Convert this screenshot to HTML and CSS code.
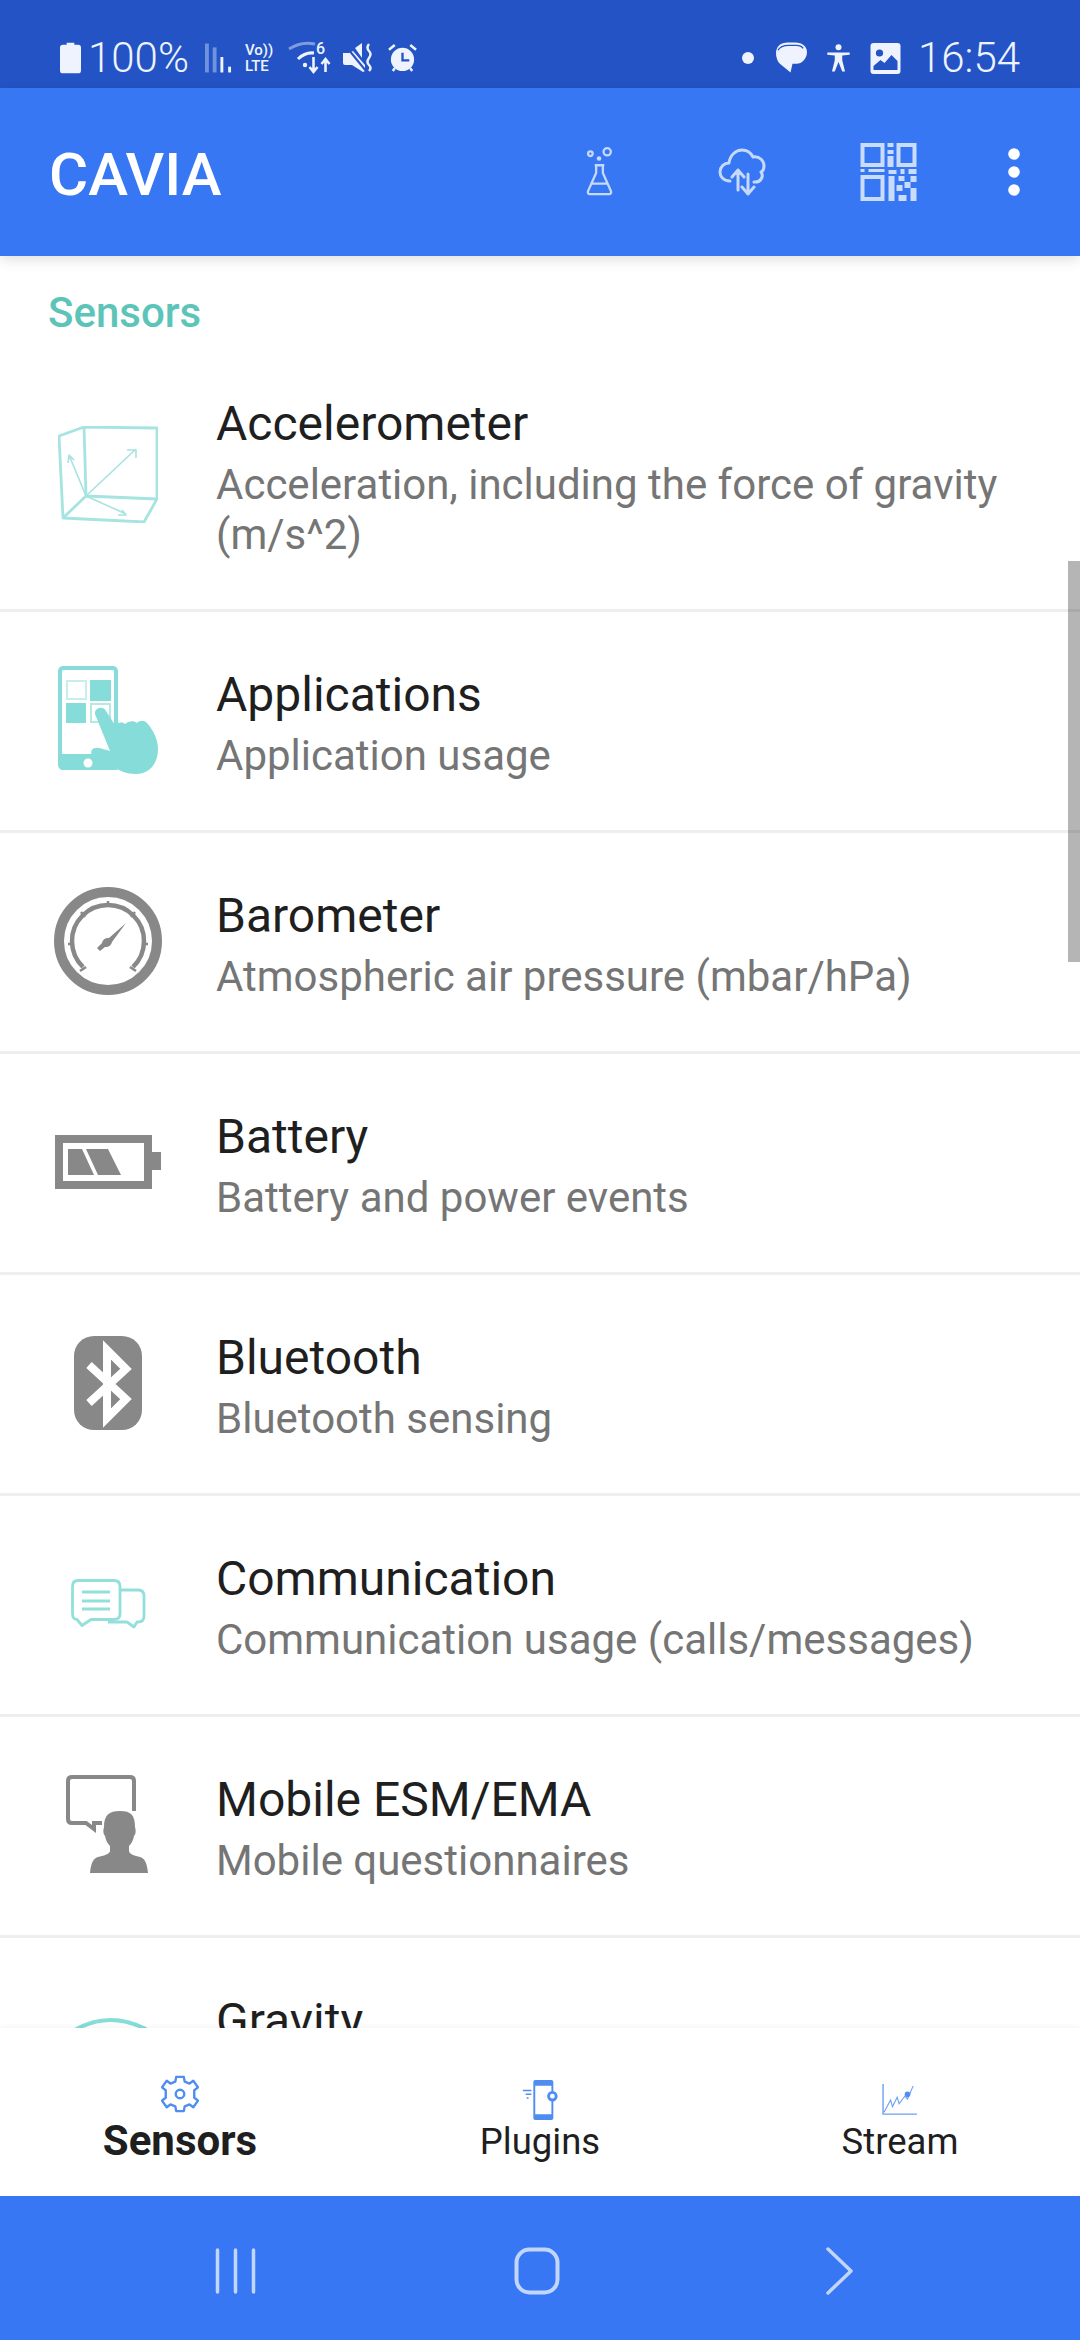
FILE: index.html
```html
<!DOCTYPE html>
<html lang="en">
<head>
  <meta charset="UTF-8" />
  <meta name="viewport" content="width=device-width, initial-scale=1.0" />
  <title>CAVIA</title>
  <link rel="stylesheet" href="styles.css">
</head>
<body>
  <div class="status-bar">
    <div class="status-group">
      <svg class="ic-batt" viewBox="0 0 22 32"><path d="M7 0h8v2h4a3 3 0 0 1 3 3v24a3 3 0 0 1-3 3H3a3 3 0 0 1-3-3V5a3 3 0 0 1 3-3h4z" fill="#eef3fd"/></svg>
      <span class="status-text">100%</span>
      <svg class="ic-signal" viewBox="0 0 28 32"><rect x="0" y="1" width="4" height="30" fill="#6f93de"/><rect x="8" y="5" width="4" height="26" fill="#6f93de"/><rect x="16" y="15" width="3" height="16" fill="#eef3fd"/><rect x="24" y="25" width="3" height="6" fill="#eef3fd"/></svg>
      <div class="volte"><span>Vo))</span><span>LTE</span></div>
      <svg class="ic-wifi" viewBox="0 0 40 32"><path d="M0 7Q12-1 26 2" fill="none" stroke="#7e9ce0" stroke-width="3"/><path d="M9 17Q16 10 25 11" fill="none" stroke="#eef3fd" stroke-width="3"/><circle cx="16" cy="23" r="2.200" fill="#eef3fd"/><path d="M24.500 15v15m-4-5 4 5 4-5M36.500 30V18m-4 4 4-5 4 5" fill="none" stroke="#eef3fd" stroke-width="2.600"/><text x="27" y="12" class="wifi-six">6</text></svg>
      <svg class="ic-mute" viewBox="0 0 30 30"><path d="M0 10h6l4-2 12 14v6l-2 1L9 22H2a2 2 0 0 1-2-2zM12 5l7-5v15z" fill="#eef3fd"/><path d="M1 1l22 27" stroke="#2353c4" stroke-width="2"/><path d="M26 1q-3 4 0 7t0 7 0 7 0 6" fill="none" stroke="#eef3fd" stroke-width="2.400"/></svg>
      <svg class="ic-alarm" viewBox="0 0 30 30"><circle cx="15" cy="16" r="12" fill="#eef3fd"/><path d="M15 9v8h7" fill="none" stroke="#2353c4" stroke-width="2.400"/><path d="M1 6l6-5M29 6l-6-5M5 28l2-3M25 28l-2-3" stroke="#eef3fd" stroke-width="2.600"/></svg>
    </div>
    <div class="status-group right">
      <span class="dot"></span>
      <svg class="ic-chat" viewBox="0 0 32 32"><path d="M12 0h8c7 0 12 4 12 10s-5 12-11 12h-4l-2 9-11-9C1 19 0 14 0 11 0 4 5 0 12 0z" fill="#eef3fd"/><path d="M2 8q3-5 11-5h8q5 0 7 3" fill="none" stroke="#2353c4" stroke-width="1.400"/></svg>
      <svg class="ic-access" viewBox="0 0 24 30"><circle cx="12" cy="3.500" r="3.200" fill="#eef3fd"/><path d="M0 9h24v2.400l-8 1v5l3 12h-3l-4-10-4 10H5l3-12v-5l-8-1z" fill="#eef3fd"/></svg>
      <svg class="ic-photo" viewBox="0 0 30 31"><path fill-rule="evenodd" d="M3 0h24a3 3 0 0 1 3 3v25a3 3 0 0 1-3 3H3a3 3 0 0 1-3-3V3a3 3 0 0 1 3-3zM3 27h24V18l-6-6-7 8-4-3-7 6z" fill="#eef3fd"/><circle cx="9" cy="10" r="3.600" fill="#2353c4"/></svg>
      <span class="status-text">16:54</span>
    </div>
  </div>

  <header class="app-bar">
    <div class="app-title">CAVIA</div>
    <div class="app-actions">
      <svg class="act-flask" viewBox="0 0 28 52"><g fill="none" stroke="#c4d9fb" stroke-width="2.400"><circle cx="4.500" cy="7" r="2.400"/><circle cx="22" cy="5" r="3.800"/><path d="M9 19h10M10.500 19v8L2 46q-.5 3 2 3h20q2.500 0 2-3l-8.500-19v-8M6 38h16"/></g><circle cx="13.500" cy="12" r="2.400" fill="#c4d9fb"/></svg>
      <svg class="act-cloud" viewBox="0 0 50 48"><g fill="none" stroke="#c4d9fb" stroke-width="3" stroke-linecap="round" stroke-linejoin="round"><path d="M11 33C4 33 1 28 1 24c0-5 4-9 9-9 1-8 7-13 13-13 5 0 9 3 11 7 7-1 11 4 11 9 0 3-1 5-3 6 3 4 0 11-7 10"/><path d="M19 42V22m-6 7 6-7 6 7M29 26v20m-6-7 6 7 6-7"/></g></svg>
      <svg class="act-qr" viewBox="0 0 56 58" fill="#c9dcfb"><path fill-rule="evenodd" d="M0 0h24v24H0zM4 4v16h16V4zM36 0h20v24H36zM40 4v16h12V4zM0 32h24v26H0zM4 36v18h16V36z"/><path d="M27 0h6v4h-6zM27 7h6v4h-6zM27 13h6v11h-6zM0 26h4v3H0zM8 26h16v3H8zM28 27h8v4h-8zM40 26h4v5h-4zM48 26h8v5h-8zM28 33h6v25h-6zM38 33h6v5h-6zM50 33h6v6h-6zM44 39h6v6h-6zM36 42h6v6h-6zM50 45h6v13h-6zM38 52h8v6h-8z"/></svg>
      <svg class="act-more" viewBox="0 0 12 48" fill="#fff"><circle cx="6" cy="6" r="5.800"/><circle cx="6" cy="24" r="5.800"/><circle cx="6" cy="42" r="5.800"/></svg>
    </div>
  </header>

  <main class="content">
    <div class="section-label">Sensors</div>

    <div class="row">
      <div class="row-icon">
        <svg class="i-accel" viewBox="0 0 100 97"><g fill="none" stroke="#a5e4e0" stroke-linejoin="round"><path stroke-width="2.800" d="M1 10 26 1 99 2V73L86 96 5 92ZM26 1 28 70 99 73M28 70 5 92"/><path stroke-width="1.600" d="M28 70 78 23m-9 1h9v8M28 70 11 29m-1 8 1-8 5 5M28 70l40 18m-8 1h8l-4-5"/></g></svg>
      </div>
      <div class="row-text">
        <div class="row-title">Accelerometer</div>
        <div class="row-sub">Acceleration, including the force of gravity (m/s^2)</div>
      </div>
    </div>

    <div class="row">
      <div class="row-icon">
        <svg class="i-apps" viewBox="0 0 100 108"><rect x="2" y="2" width="56" height="100" rx="3" fill="#fff" stroke="#86dcd8" stroke-width="4"/><path d="M2 88h44l14 16H4a2 2 0 0 1-2-2z" fill="#86dcd8"/><circle cx="30" cy="97" r="4.500" fill="#fff"/><rect x="9" y="15" width="19" height="18" fill="#fff" stroke="#c8eeec" stroke-width="2"/><rect x="32" y="14" width="21" height="21" fill="#86dcd8"/><rect x="8" y="37" width="20" height="20" fill="#86dcd8"/><rect x="33" y="38" width="19" height="18" fill="#fff" stroke="#b5e9e6" stroke-width="2"/><path d="M37 48c-1-6 8-9 11-3l9 14c3-3 8-3 10-1 3-3 9-4 12-1 3-3 7-3 10 0 7 8 11 17 11 26 0 16-10 25-22 25-10 0-17-3-24-9L36 91c-5-3-3-10 3-9 5 0 9 2 13 3z" fill="#86dcd8"/></svg>
      </div>
      <div class="row-text">
        <div class="row-title">Applications</div>
        <div class="row-sub">Application usage</div>
      </div>
    </div>

    <div class="row">
      <div class="row-icon">
        <svg class="i-baro" viewBox="0 0 108 108"><g fill="none" stroke="#888"><circle cx="54" cy="54" r="49" stroke-width="10"/><path d="M29 80a36 36 0 1 1 50 0" stroke-width="4.500"/><path stroke-width="2.500" d="M54 14v6M27 25l4 5M81 25l-4 5M14 57h6M88 57h6M26 84l6-4M82 84l-6-4"/></g><path d="M46 64l-3-3 5-5a6 6 0 0 1 7-5l17-15-14 19a6 6 0 0 1-7 5z" fill="#888"/></svg>
      </div>
      <div class="row-text">
        <div class="row-title">Barometer</div>
        <div class="row-sub">Atmospheric air pressure (mbar/hPa)</div>
      </div>
    </div>

    <div class="row">
      <div class="row-icon">
        <svg class="i-batt" viewBox="0 0 106 54"><path fill-rule="evenodd" d="M0 0h97v17h9v18h-9v19H0zM8 8v38h81V8z" fill="#888"/><path d="M13 14h14l12 26H13zM31 14h22l13 26H43z" fill="#888"/></svg>
      </div>
      <div class="row-text">
        <div class="row-title">Battery</div>
        <div class="row-sub">Battery and power events</div>
      </div>
    </div>

    <div class="row">
      <div class="row-icon">
        <svg class="i-bt" viewBox="0 0 68 94"><rect width="68" height="94" rx="20" fill="#888"/><path d="M15 29 52 63 33 82V14l19 19L15 67" fill="none" stroke="#fff" stroke-width="8"/></svg>
      </div>
      <div class="row-text">
        <div class="row-title">Bluetooth</div>
        <div class="row-sub">Bluetooth sensing</div>
      </div>
    </div>

    <div class="row">
      <div class="row-icon">
        <svg class="i-comm" viewBox="0 0 75 50"><g fill="none" stroke="#93dfdb" stroke-width="2.800" stroke-linejoin="round"><path d="M7 1.500h36q6 0 6 6v27q0 6-6 6H20l-9 6-5-6q-4.500 0-4.500-6V7.500q0-6 5.500-6z"/><path d="M49 11h18q6 0 6 6v20q0 6-6 6h-1l-3 5-7-5H37"/><path d="M11 13h28M11 22h28M11 30h28"/></g></svg>
      </div>
      <div class="row-text">
        <div class="row-title">Communication</div>
        <div class="row-sub">Communication usage (calls/messages)</div>
      </div>
    </div>

    <div class="row">
      <div class="row-icon">
        <svg class="i-esm" viewBox="0 0 84 100"><path fill="none" stroke="#888" stroke-width="4" d="M68 36V6q0-4-4-4H6Q2 2 2 6v38q0 4 4 4h14l8 6v-6h8"/><path d="M38 52c0-12 5-16 16-16s15 4 15 16c1 3 1 7-1 9-1 5-3 8-5 10v5c0 3 6 5 11 6 4 1 7 5 8 16H24c1-11 4-15 8-16 5-1 12-3 12-6v-5c-2-2-4-5-5-10-2-2-2-6-1-9z" fill="#888"/></svg>
      </div>
      <div class="row-text">
        <div class="row-title">Mobile ESM/EMA</div>
        <div class="row-sub">Mobile questionnaires</div>
      </div>
    </div>

    <div class="row">
      <div class="row-icon">
        <svg class="i-gravity" viewBox="0 0 80 58"><path d="M2 16Q38-8 78 12" fill="none" stroke="#86dcd8" stroke-width="4"/></svg>
      </div>
      <div class="row-text row-text-top">
        <div class="row-title">Gravity</div>
      </div>
    </div>

    <div class="scroll-thumb"></div>
  </main>

  <nav class="tabs">
    <div class="tab active">
      <svg class="tab-gear" viewBox="0 0 40 40"><path fill="none" stroke="#4f8df0" stroke-width="2.500" stroke-linejoin="round" d="M16 2h8l1 5 5 2 4-3 5 7-4 3v8l4 3-5 7-4-3-5 2-1 5h-8l-1-5-5-2-4 3-5-7 4-3v-8L1 13l5-7 4 3 5-2z"/><circle cx="20" cy="20" r="4.500" fill="none" stroke="#4f8df0" stroke-width="2.500"/></svg>
      <span>Sensors</span>
    </div>
    <div class="tab">
      <svg class="tab-plug" viewBox="0 0 38 42"><path fill-rule="evenodd" d="M14 0h17a2 2 0 0 1 2 2v38a2 2 0 0 1-2 2H14a2 2 0 0 1-2-2V2a2 2 0 0 1 2-2zM14 6v30h17V6z" fill="#4f8df0"/><path d="M1 11h9M4 15h6M5 19h2" stroke="#4f8df0" stroke-width="1.600"/><circle cx="32" cy="17" r="4" fill="#fff" stroke="#4f8df0" stroke-width="3"/></svg>
      <span>Plugins</span>
    </div>
    <div class="tab">
      <svg class="tab-chart" viewBox="0 0 38 34"><path d="M1 0v32h36" fill="none" stroke="#6fa0f2" stroke-width="1.500"/><path d="M2 30 9 17l2 7 5-10 2 7 6-8 3 3 6-14" fill="none" stroke="#6fa0f2" stroke-width="1.200"/><circle cx="27" cy="11" r="3" fill="#4f8df0"/></svg>
      <span>Stream</span>
    </div>
  </nav>

  <div class="nav-bar">
    <svg class="nav-recent" viewBox="0 0 41 46"><path d="M2.500 2v42M20.500 2v42M38.500 2v42" stroke="#c2d6fb" stroke-width="3.500" stroke-linecap="round"/></svg>
    <svg class="nav-home" viewBox="0 0 46 48"><rect x="2.500" y="2.500" width="41" height="43" rx="13" fill="none" stroke="#c2d6fb" stroke-width="4"/></svg>
    <svg class="nav-back" viewBox="0 0 27 48"><path d="M2 2 25 24 2 46" fill="none" stroke="#c2d6fb" stroke-width="3.500" stroke-linecap="round" stroke-linejoin="round"/></svg>
  </div>
</body>
</html>
```

FILE: styles.css
```css
html, body {
  height: 100%;
}
body {
  margin: 0;
  height: 2340px;
  display: flex;
  flex-direction: column;
  overflow: hidden;
  font-family: 'Roboto', sans-serif;
  background: #fff;
  color: #1f1f1f;
}
svg {
  display: block;
  flex: none;
}

/* status bar */
.status-bar {
  height: 88px;
  flex: none;
  box-sizing: border-box;
  padding: 42px 60px 0 60px;
  display: flex;
  justify-content: space-between;
  align-items: flex-start;
  background: #2353c4;
  color: #eef3fd;
}
.status-group {
  display: flex;
  align-items: center;
  height: 32px;
}
.status-text {
  font-size: 42px;
  font-weight: 300;
  line-height: 32px;
}
.ic-batt { width: 21px; height: 32px; margin-right: 7px; }
.ic-signal { width: 27px; height: 32px; margin-left: 16px; }
.volte {
  margin-left: 13px;
  width: 30px;
  display: flex;
  flex-direction: column;
  font-size: 15px;
  font-weight: 500;
  line-height: 16px;
  white-space: nowrap;
}
.ic-wifi { width: 40px; height: 32px; margin-left: 14px; overflow: visible; }
.wifi-six { font-size: 16px; font-family: 'Roboto', sans-serif; font-weight: 500; fill: #eef3fd; }
.ic-mute { width: 30px; height: 30px; margin-left: 14px; }
.ic-alarm { width: 29px; height: 29px; margin-left: 15px; }
.dot {
  width: 12px;
  height: 12px;
  border-radius: 50%;
  background: #eef3fd;
}
.ic-chat { width: 31px; height: 32px; margin-left: 22px; }
.ic-access { width: 23px; height: 28px; margin-left: 20px; }
.ic-photo { width: 31px; height: 31px; margin-left: 20px; }
.right .status-text { margin-left: 17px; }

/* app bar */
.app-bar {
  height: 168px;
  flex: none;
  box-sizing: border-box;
  padding: 0 0 0 49px;
  display: flex;
  align-items: center;
  background: #3777f3;
  box-shadow: 0 4px 12px rgba(0,0,0,0.12);
  position: relative;
  z-index: 2;
}
.app-title {
  flex: 1;
  padding-top: 4px;
  color: #fff;
  font-size: 60px;
  font-weight: 500;
}
.app-actions {
  display: flex;
  align-items: center;
}
.act-flask { width: 27px; height: 50px; margin-right: 105px; }
.act-cloud { width: 52px; height: 48px; margin-right: 90px; }
.act-qr { width: 57px; height: 58px; margin-right: 91px; }
.act-more { width: 12px; height: 48px; margin-right: 60px; }

/* list */
.content {
  flex: 1;
  min-height: 0;
  overflow: hidden;
  position: relative;
}
.section-label {
  padding: 31px 48px 2px;
  line-height: 52px;
  color: #5cc4b9;
  font-size: 42px;
  font-weight: 500;
}
.row {
  display: flex;
  align-items: center;
  min-height: 122px;
  padding: 47px 0 49px;
  border-bottom: 3px solid #eeeeee;
}
.row-icon {
  width: 216px;
  flex: none;
  display: flex;
  justify-content: center;
}
.row-text {
  flex: 1;
  padding-right: 48px;
}
.row-text-top {
  align-self: flex-start;
}
.row-title {
  font-size: 48px;
  line-height: 72px;
}
.row-sub {
  color: #757575;
  font-size: 42px;
  line-height: 50px;
}
.i-accel { width: 100px; height: 97px; }
.i-apps { width: 100px; height: 108px; }
.i-baro { width: 108px; height: 108px; }
.i-batt { width: 106px; height: 54px; }
.i-bt { width: 68px; height: 94px; }
.i-comm { width: 75px; height: 50px; }
.i-esm { width: 84px; height: 100px; }
.i-gravity { width: 80px; height: 58px; }
.scroll-thumb {
  position: absolute;
  right: 0;
  top: 305px;
  width: 12px;
  height: 401px;
  background: rgba(0,0,0,0.29);
}

/* bottom tabs */
.tabs {
  height: 168px;
  flex: none;
  display: grid;
  grid-template-columns: repeat(3, 1fr);
  background: #fff;
  box-shadow: 0 -2px 4px rgba(0,0,0,0.04);
  position: relative;
}
.tab {
  display: flex;
  flex-direction: column;
  align-items: center;
  justify-content: flex-end;
  padding-bottom: 32px;
  font-size: 36.5px;
  line-height: 44px;
  color: #1f1f1f;
}
.tab.active {
  padding-bottom: 33px;
  font-weight: 700;
  font-size: 42px;
}
.tab-gear { width: 38px; height: 38px; margin-bottom: 6px; }
.tab-plug { width: 38px; height: 40px; margin-bottom: 0; }
.tab-chart { width: 38px; height: 32px; margin-bottom: 4px; }

/* system nav */
.nav-bar {
  height: 144px;
  flex: none;
  box-sizing: border-box;
  padding: 6px 0 0 215px;
  display: flex;
  align-items: center;
  background: #3777f3;
}
.nav-recent { width: 41px; height: 46px; margin-right: 258px; }
.nav-home { width: 46px; height: 48px; margin-right: 266px; }
.nav-back { width: 27px; height: 48px; }
```
